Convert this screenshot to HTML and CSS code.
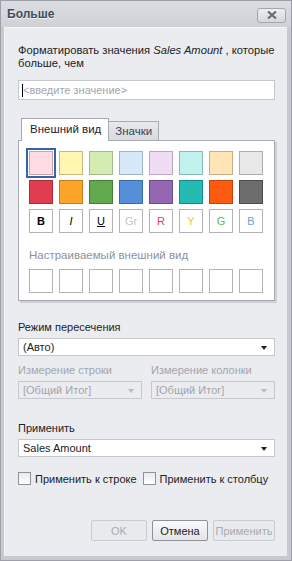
FILE: index.html
```html
<!DOCTYPE html>
<html lang="ru">
<head>
<meta charset="UTF-8">
<title>Больше</title>
<link rel="stylesheet" href="styles.css">
</head>
<body>

<div class="window">
  <!-- Title bar -->
  <div class="titlebar">
    <span class="title">Больше</span>
    <button class="close-btn" type="button">
      <svg width="10" height="8" viewBox="0 0 10 8"><path d="M1 0.5 L9 7.5 M9 0.5 L1 7.5" stroke="#6b6d74" stroke-width="2.2"/></svg>
    </button>
  </div>

  <div class="content">
    <p class="intro">Форматировать значения <i>Sales Amount</i> , которые больше, чем</p>
    <div class="input"><span class="caret"></span>&lt;введите значение&gt;</div>

    <!-- Tabs -->
    <div class="tabs">
      <div class="tab active">Внешний вид</div>
      <div class="tab">Значки</div>
    </div>
    <div class="tab-panel">
      <div class="swatches">
        <div class="swatch selected" style="background:#fddde3;border-color:#c9a2aa"></div>
        <div class="swatch" style="background:#fff6b1;border-color:#c6b87e"></div>
        <div class="swatch" style="background:#d3ecb1;border-color:#a3b98b"></div>
        <div class="swatch" style="background:#d6e9fb;border-color:#a1b2c6"></div>
        <div class="swatch" style="background:#f1dcf5;border-color:#bba9c1"></div>
        <div class="swatch" style="background:#c1f2ee;border-color:#8ab8b4"></div>
        <div class="swatch" style="background:#ffe4b6;border-color:#c8ab89"></div>
        <div class="swatch" style="background:#e8e8e8;border-color:#adadad"></div>

        <div class="swatch" style="background:#e23c50;border-color:#a82c3c"></div>
        <div class="swatch" style="background:#fca427;border-color:#c47d1b"></div>
        <div class="swatch" style="background:#62a94d;border-color:#467d37"></div>
        <div class="swatch" style="background:#548ed8;border-color:#3a69a8"></div>
        <div class="swatch" style="background:#9567b3;border-color:#6e4a86"></div>
        <div class="swatch" style="background:#23bcb4;border-color:#168a84"></div>
        <div class="swatch" style="background:#fd5b0f;border-color:#c2430a"></div>
        <div class="swatch" style="background:#6d6d6d;border-color:#4c4c4c"></div>

        <div class="swatch letter bold">B</div>
        <div class="swatch letter italic">I</div>
        <div class="swatch letter underline">U</div>
        <div class="swatch letter" style="color:#c6c6c6">Gr</div>
        <div class="swatch letter" style="color:#ea3a6a">R</div>
        <div class="swatch letter" style="color:#f2c23e">Y</div>
        <div class="swatch letter" style="color:#5cb65a">G</div>
        <div class="swatch letter" style="color:#6e9ddb">B</div>
      </div>

      <div class="custom-label">Настраиваемый внешний вид</div>
      <div class="swatches">
        <div class="swatch empty"></div>
        <div class="swatch empty"></div>
        <div class="swatch empty"></div>
        <div class="swatch empty"></div>
        <div class="swatch empty"></div>
        <div class="swatch empty"></div>
        <div class="swatch empty"></div>
        <div class="swatch empty"></div>
      </div>
    </div>

    <!-- Intersection mode -->
    <div class="label mode-label">Режим пересечения</div>
    <div class="select">(Авто)<span class="arrow"></span></div>

    <div class="dims">
      <div class="dim">
        <div class="label disabled">Измерение строки</div>
        <div class="select disabled">[Общий Итог]<span class="arrow"></span></div>
      </div>
      <div class="dim">
        <div class="label disabled">Измерение колонки</div>
        <div class="select disabled">[Общий Итог]<span class="arrow"></span></div>
      </div>
    </div>

    <div class="label apply-label">Применить</div>
    <div class="select">Sales Amount<span class="arrow"></span></div>

    <div class="checks">
      <label class="check"><span class="box"></span>Применить к строке</label>
      <label class="check"><span class="box"></span>Применить к столбцу</label>
    </div>

    <!-- Dialog buttons -->
    <div class="buttons">
      <button class="btn disabled" type="button">OK</button>
      <button class="btn" type="button">Отмена</button>
      <button class="btn disabled wide" type="button">Применить</button>
    </div>
  </div>
</div>

</body>
</html>
```

FILE: styles.css
```css
body {
  margin: 0;
  font-family: "Liberation Sans", Arial, sans-serif;
  font-size: 11px;
  color: #202226;
}
.window {
  width: 292px;
  height: 561px;
  box-sizing: border-box;
  background: #c7c9d0;
  border: 1px solid #9ea0a8;
  display: flex;
  flex-direction: column;
}
/* Title bar */
.titlebar {
  height: 26px;
  display: flex;
  align-items: center;
  justify-content: space-between;
  padding: 0 5px 0 6px;
  background: linear-gradient(#dcdde2, #cfd1d7);
}
.title {
  font-weight: bold;
  font-size: 12px;
  color: #3f4c60;
  text-shadow: 0 1px 0 #f2f3f5;
}
.close-btn {
  width: 29px;
  height: 15px;
  margin-top: 2px;
  padding: 0;
  border: 1px solid #a4a6ad;
  border-radius: 3px;
  background: linear-gradient(#eceef1, #d5d7dc);
  display: flex;
  align-items: center;
  justify-content: center;
}
.content {
  flex: 1;
  margin: 0 4px 4px 3px;
  padding: 16px 12px 0 13px;
  background: #ebecf0;
  border-top: 1px solid #f4f5f7;
  border-left: 1px solid #f4f5f7;
  display: flex;
  flex-direction: column;
}
.intro {
  margin: 0;
  font-size: 11.2px;
  line-height: 13px;
}
.input {
  display: flex;
  align-items: center;
  margin-top: 10px;
  height: 18px;
  padding-left: 3px;
  background: #fff;
  border: 1px solid #c6c8cd;
  color: #a3a6ad;
}
.caret {
  width: 1px;
  height: 13px;
  background: #000;
}
/* Tabs */
.tabs {
  display: flex;
  align-items: flex-end;
  margin: 18px 0 0 3px;
  position: relative;
  z-index: 1;
}
.tab {
  height: 18px;
  line-height: 18px;
  padding: 0 6px;
  border: 1px solid #a8aab1;
  border-bottom: none;
  border-left: none;
  background: linear-gradient(#e8e9ec, #d9dadf);
  color: #3c4150;
  font-size: 11.5px;
}
.tab.active {
  height: 22px;
  line-height: 21px;
  padding: 0 7px 0 8px;
  background: #fff;
  border-left: 1px solid #a8aab1;
  margin-bottom: -1px;
  color: #1e2230;
}
.tab-panel {
  background: #fff;
  border: 1px solid #a8aab1;
  box-shadow: 2px 2px 0 #cfd0d5;
  padding: 10px 10px 7px 10px;
}
.swatches {
  display: grid;
  grid-template-columns: repeat(8, 24px);
  column-gap: 6px;
  row-gap: 5px;
}
.swatch {
  width: 24px;
  height: 24px;
  box-sizing: border-box;
  border: 1px solid #b3b3b3;
}
.swatch.selected {
  outline: 2px solid #3465a8;
  outline-offset: 1px;
}
.swatch.letter {
  display: flex;
  align-items: center;
  justify-content: center;
  font-size: 11px;
  background: #fff;
}
.swatch.bold {
  font-weight: bold;
  color: #000;
}
.swatch.italic {
  font-style: italic;
  color: #000;
}
.swatch.underline {
  text-decoration: underline;
  color: #000;
}
.swatch.empty {
  background: #fff;
}
.custom-label {
  color: #8d92a0;
  font-size: 11.5px;
  margin: 15px 0 7px;
  line-height: 14px;
}
.label {
  line-height: 14px;
}
.mode-label {
  margin-top: 19px;
}
.select {
  position: relative;
  height: 16px;
  line-height: 16px;
  margin-top: 4px;
  padding-left: 4px;
  background: #fff;
  border: 1px solid #c6c8cd;
}
.select .arrow {
  position: absolute;
  right: 7px;
  top: 7px;
  border-left: 3px solid transparent;
  border-right: 3px solid transparent;
  border-top: 4px solid #1e1e1e;
}
.select.disabled {
  background: #ebecf0;
  color: #a2a5ad;
}
.select.disabled .arrow {
  border-top-color: #b8bac0;
}
.label.disabled {
  color: #a2a5ad;
}
.dims {
  display: flex;
  gap: 9px;
  margin-top: 7px;
}
.dim {
  flex: 1;
}
.apply-label {
  margin-top: 22px;
}
.checks {
  display: flex;
  gap: 6px;
  margin-top: 15px;
  white-space: nowrap;
}
.check {
  display: flex;
  align-items: center;
  gap: 4px;
}
.box {
  width: 11px;
  height: 11px;
  border: 1px solid #8f9299;
  background: linear-gradient(#e9eaed, #fff);
}
.buttons {
  display: flex;
  justify-content: flex-end;
  gap: 5px;
  margin-top: 35px;
}
.btn {
  width: 56px;
  height: 21px;
  padding: 0;
  font-family: inherit;
  font-size: 11px;
  border: 1px solid #8e9198;
  border-radius: 2px;
  background: linear-gradient(#fbfbfc, #e3e4e8);
  color: #202226;
}
.btn.wide {
  width: 62px;
}
.btn.disabled {
  border-color: #c9cbd1;
  background: #e9eaed;
  color: #a7aab1;
}
```
